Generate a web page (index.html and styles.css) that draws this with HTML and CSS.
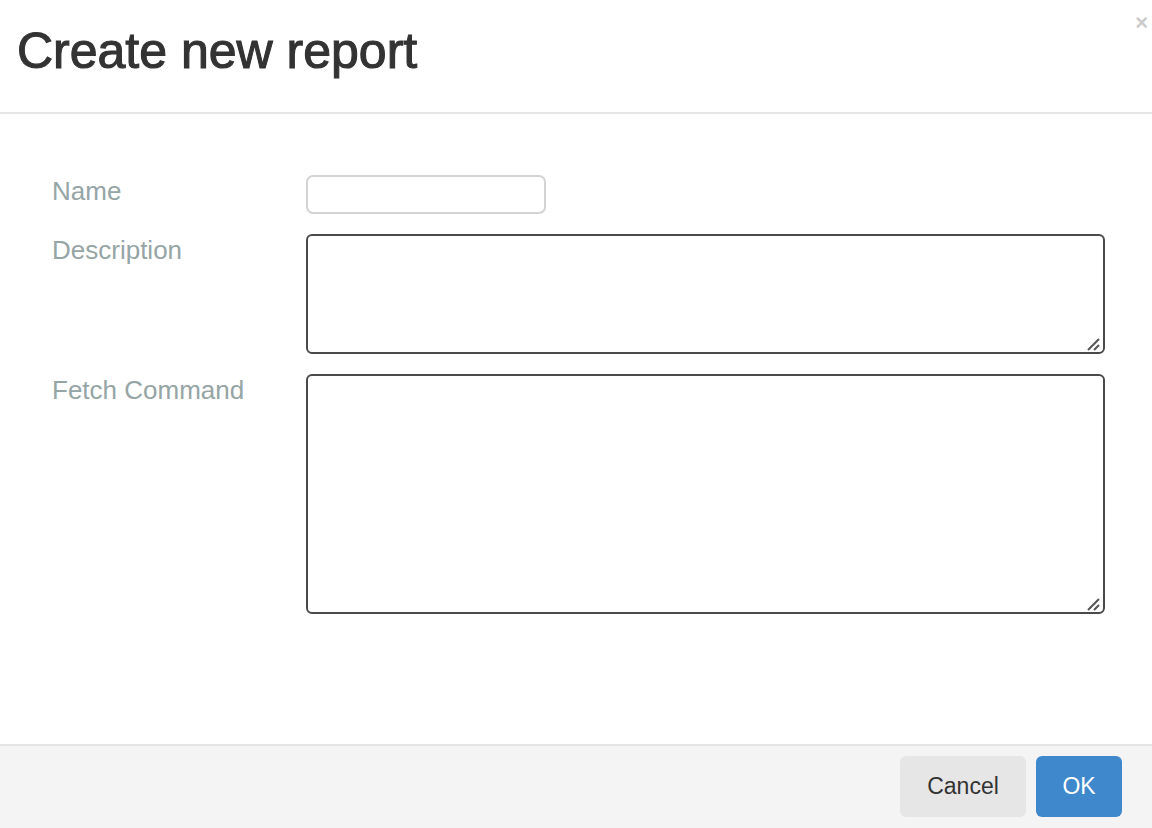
FILE: index.html
```html
<!DOCTYPE html>
<html>
<head>
<meta charset="utf-8">
<link rel="stylesheet" href="styles.css">
</head>
<body>
<div class="modal">
  <div class="modal-header">
    <h1 class="title">Create new report</h1>
    <span class="close">×</span>
  </div>
  <div class="modal-body">
    <form class="form">
      <label class="label">Name</label>
      <div class="field"><input class="input" type="text"></div>
      <label class="label">Description</label>
      <div class="field">
        <textarea class="textarea desc"></textarea>
        <svg class="grip" width="15" height="15" viewBox="0 0 15 15"><path d="M2 14 L13 3 M8 14 L13 9" stroke="#555555" stroke-width="2" fill="none"/></svg>
      </div>
      <label class="label">Fetch Command</label>
      <div class="field">
        <textarea class="textarea fetch"></textarea>
        <svg class="grip" width="15" height="15" viewBox="0 0 15 15"><path d="M2 14 L13 3 M8 14 L13 9" stroke="#555555" stroke-width="2" fill="none"/></svg>
      </div>
    </form>
  </div>
  <div class="modal-footer">
    <button class="btn btn-cancel" type="button">Cancel</button>
    <button class="btn btn-ok" type="button">OK</button>
  </div>
</div>
</body>
</html>
```
FILE: styles.css
```css
html, body {
  margin: 0;
  padding: 0;
  background: #ffffff;
  font-family: "Liberation Sans", Arial, sans-serif;
}
.modal {
  width: 1152px;
  height: 828px;
  display: flex;
  flex-direction: column;
}
.modal-header {
  position: relative;
  height: 114px;
  border-bottom: 2px solid #e5e5e5;
  box-sizing: border-box;
  padding: 23px 0 0 17px;
}
.title {
  margin: 0;
  font-size: 50px;
  font-weight: normal;
  color: #333333;
  line-height: 56px;
  -webkit-text-stroke: 1.1px #333333;
}
.close {
  position: absolute;
  right: 4px;
  top: 10px;
  font-size: 22px;
  font-weight: bold;
  color: #cccccc;
  line-height: 26px;
}
.modal-body {
  flex: 1;
  padding: 61px 47px 0 52px;
}
.form {
  display: grid;
  grid-template-columns: 254px 1fr;
  row-gap: 20px;
}
.label {
  font-size: 26px;
  color: #95a5a6;
  padding-top: 1px;
  line-height: 30px;
}
.field {
  position: relative;
  display: flex;
}
.input {
  width: 240px;
  height: 39px;
  box-sizing: border-box;
  border: 2px solid #d3d3d3;
  border-radius: 7px;
  background: #fff;
  margin: 0;
}
.textarea {
  width: 100%;
  box-sizing: border-box;
  border: 2px solid #4a4a4a;
  border-radius: 6px;
  margin: 0;
  background: #fff;
  resize: none;
  font-family: "Liberation Sans", Arial, sans-serif;
}
.desc { height: 120px; }
.fetch { height: 240px; }
.grip {
  position: absolute;
  right: 4px;
  bottom: 3px;
}
.modal-footer {
  height: 84px;
  box-sizing: border-box;
  border-top: 2px solid #e5e5e5;
  background: #f4f4f4;
  display: flex;
  justify-content: flex-end;
  align-items: flex-start;
  gap: 10px;
  padding: 10px 30px 0 0;
}
.btn {
  height: 61px;
  border: none;
  border-radius: 6px;
  font-family: "Liberation Sans", Arial, sans-serif;
  font-size: 23px;
  padding: 0;
}
.btn-cancel {
  width: 126px;
  background: #e6e6e6;
  color: #333333;
}
.btn-ok {
  width: 86px;
  background: #3f88cc;
  color: #ffffff;
}
```
